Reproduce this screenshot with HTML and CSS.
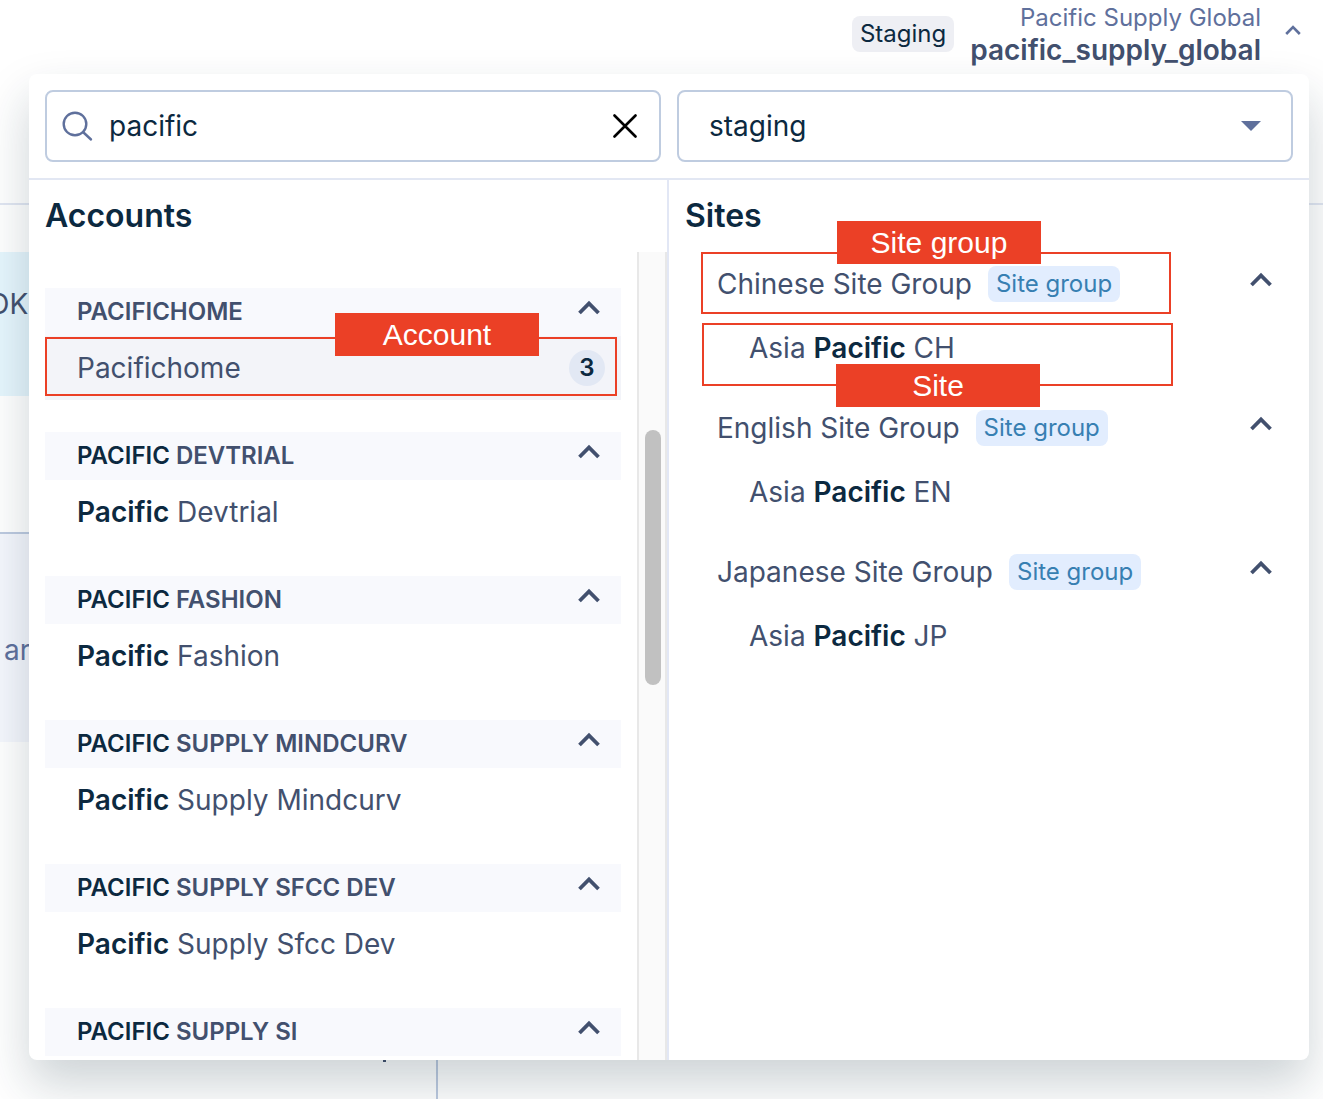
FILE: index.html
```html
<!DOCTYPE html>
<html lang="en">
<head>
<meta charset="utf-8">
<title>Account switcher</title>
<link rel="stylesheet" href="styles.css">
</head>
<body>
<svg class="sprite" aria-hidden="true">
  <symbol id="chevron" viewBox="0 0 24 16"><path d="M2.500 13 12 3.500 21.500 13" fill="none" stroke="currentColor" stroke-width="3.800"/></symbol>
</svg>

<header class="topbar">
  <span class="env">Staging</span>
  <div class="current">
    <span class="current-name">Pacific Supply Global</span>
    <strong class="current-id">pacific_supply_global</strong>
  </div>
  <button class="icon-button toggle" type="button" aria-label="Close switcher">
    <svg width="16" height="10" viewBox="0 0 16 10"><path d="M1.200 9 8 2.200 14.800 9" fill="none" stroke="currentColor" stroke-width="2.600"/></svg>
  </button>
</header>

<main class="stage">
  <div class="page" aria-hidden="true">
    <div class="page-head"></div>
    <div class="page-banner"><span>OK</span></div>
    <div class="page-block"><span>ar</span></div>
    <div class="page-columns"><div class="page-column"><i class="speck"></i></div></div>
  </div>

  <div class="panel">
    <form class="filters">
      <div class="field">
        <svg class="search-icon" width="32" height="32" viewBox="0 0 32 32"><g fill="none" stroke="currentColor" stroke-width="2.400" stroke-linecap="round"><circle cx="14" cy="14" r="11.300"/><path d="M22 22 30 29.500"/></g></svg>
        <input class="search" type="text" value="pacific" aria-label="Search accounts">
        <button class="icon-button clear" type="button" aria-label="Clear search">
          <svg width="24" height="24" viewBox="0 0 24 24"><path d="M1.500 1.500 22.500 22.500M22.500 1.500 1.500 22.500" stroke="currentColor" stroke-width="2.600" stroke-linecap="round"/></svg>
        </button>
      </div>
      <div class="field">
        <select class="select" aria-label="Environment"><option>staging</option></select>
        <svg class="caret" width="20" height="10" viewBox="0 0 20 10"><path d="M0 0H20L10 10Z" fill="currentColor"/></svg>
      </div>
    </form>

    <div class="columns">
      <section class="accounts">
        <h2 class="title">Accounts</h2>
        <div class="scroll">
          <div class="account-list">
            <div class="account">
              <button class="account-head" type="button"><span>PACIFICHOME</span><svg class="chevron"><use href="#chevron"/></svg></button>
              <div class="account-row selected">
                <a class="link" href="#">Pacifichome</a><span class="count">3</span>
                <div class="mark mark-account"><span class="tag">Account</span></div>
              </div>
            </div>
            <div class="account">
              <button class="account-head" type="button"><span><b>PACIFIC</b> DEVTRIAL</span><svg class="chevron"><use href="#chevron"/></svg></button>
              <div class="account-row"><a class="link" href="#"><b>Pacific</b> Devtrial</a></div>
            </div>
            <div class="account">
              <button class="account-head" type="button"><span><b>PACIFIC</b> FASHION</span><svg class="chevron"><use href="#chevron"/></svg></button>
              <div class="account-row"><a class="link" href="#"><b>Pacific</b> Fashion</a></div>
            </div>
            <div class="account">
              <button class="account-head" type="button"><span><b>PACIFIC</b> SUPPLY MINDCURV</span><svg class="chevron"><use href="#chevron"/></svg></button>
              <div class="account-row"><a class="link" href="#"><b>Pacific</b> Supply Mindcurv</a></div>
            </div>
            <div class="account">
              <button class="account-head" type="button"><span><b>PACIFIC</b> SUPPLY SFCC DEV</span><svg class="chevron"><use href="#chevron"/></svg></button>
              <div class="account-row"><a class="link" href="#"><b>Pacific</b> Supply Sfcc Dev</a></div>
            </div>
            <div class="account">
              <button class="account-head" type="button"><span><b>PACIFIC</b> SUPPLY SI</span><svg class="chevron"><use href="#chevron"/></svg></button>
            </div>
          </div>
          <div class="track"><div class="thumb"></div></div>
        </div>
      </section>

      <section class="sites">
        <h2 class="title">Sites</h2>
        <div class="site-list">
          <div class="site-group">
            <div class="group-row">
              <a class="link" href="#">Chinese Site Group</a><span class="badge">Site group</span>
              <button class="icon-button fold" type="button" aria-label="Collapse"><svg class="chevron"><use href="#chevron"/></svg></button>
              <div class="mark mark-group"><span class="tag">Site group</span></div>
            </div>
            <div class="site-row">
              <a class="link" href="#">Asia <b>Pacific</b> CH</a>
              <div class="mark mark-site"><span class="tag">Site</span></div>
            </div>
          </div>
          <div class="site-group">
            <div class="group-row">
              <a class="link" href="#">English Site Group</a><span class="badge">Site group</span>
              <button class="icon-button fold" type="button" aria-label="Collapse"><svg class="chevron"><use href="#chevron"/></svg></button>
            </div>
            <div class="site-row"><a class="link" href="#">Asia <b>Pacific</b> EN</a></div>
          </div>
          <div class="site-group">
            <div class="group-row">
              <a class="link" href="#">Japanese Site Group</a><span class="badge">Site group</span>
              <button class="icon-button fold" type="button" aria-label="Collapse"><svg class="chevron"><use href="#chevron"/></svg></button>
            </div>
            <div class="site-row"><a class="link" href="#">Asia <b>Pacific</b> JP</a></div>
          </div>
        </div>
      </section>
    </div>
  </div>
</main>
</body>
</html>
```

FILE: styles.css
```css
* { box-sizing: border-box; }

body {
  margin: 0;
  min-height: 100vh;
  display: flex;
  flex-direction: column;
  background: #fff;
  color: #42506e;
  font: 400 28px/32px Inter, "Liberation Sans", sans-serif;
  overflow-x: hidden;
}

button, input, select { font: inherit; color: inherit; }
b { font-weight: 600; color: #0c2940; }
svg { display: block; flex: none; }
.sprite { position: absolute; width: 0; height: 0; }
.icon-button { display: block; padding: 0; border: 0; background: none; }

/* Top bar */
.topbar {
  display: flex;
  justify-content: flex-end;
  align-items: flex-start;
  height: 74px;
  padding: 2px 22px 0 16px;
}
.env {
  margin: 14px 16px 0 0;
  padding: 2px 8px;
  border-radius: 8px;
  background: #eeeff4;
  color: #0c2940;
  font-size: 24px;
}
.current { display: flex; flex-direction: column; align-items: flex-end; }
.current-name { font-size: 24px; color: #5f709c; }
.current-id { font-weight: 600; }
.toggle { margin: 23px 0 0 24px; color: #5f709c; }

/* The page and the panel over it share one grid cell */
.stage { flex: 1; display: grid; }
.page, .panel { grid-area: 1 / 1; min-width: 0; }
.page { display: flex; flex-direction: column; color: #5f709c; overflow: hidden; }
.page-head { height: 131px; border-bottom: 2px solid #e1e6f2; }
.page-banner, .page-block { width: 50%; }
.page-banner {
  display: flex;
  align-items: center;
  height: 144px;
  margin: 47px 0 136px;
  background: #e6f6fd;
  color: #42506e;
}
.page-banner span { margin-left: -12px; padding-bottom: 40px; }
.page-block {
  height: 210px;
  padding: 100px 4px;
  border-top: 2px solid #bdcae0;
  background: #f5f7fd;
}
.page-columns { flex: 1; display: flex; }
.page-column {
  display: flex;
  justify-content: flex-end;
  align-items: flex-end;
  width: 438px;
  padding: 0 50px 37px 0;
  border-right: 2px solid #bdcae0;
}
.speck { width: 3px; height: 2px; background: #42506e; }

/* Panel */
.panel {
  display: flex;
  flex-direction: column;
  position: relative;
  margin: 0 14px 39px 29px;
  border-radius: 8px;
  background: #fff;
  box-shadow: 0 24px 48px rgba(20, 45, 60, .21);
}
.filters {
  display: flex;
  gap: 16px;
  padding: 16px;
  border-bottom: 2px solid #e2e7f3;
}
.field {
  flex: 1;
  display: flex;
  align-items: center;
  min-width: 0;
  height: 72px;
  padding: 0 14px;
  border: 2px solid #bfcce0;
  border-radius: 8px;
  color: #5f709c;
}
.search, .select {
  flex: 1;
  min-width: 0;
  height: 100%;
  padding: 0;
  border: 0;
  outline: 0;
  background: none;
  color: #0c2940;
}
.search { margin-left: 16px; }
.clear { margin-right: 8px; color: #000; }
.select { appearance: none; margin: 0 -20px 0 16px; }
.caret { margin-right: 16px; pointer-events: none; }

.columns { flex: 1; display: grid; grid-template-columns: 1fr 1fr; }
.title {
  margin: 0;
  padding: 16px;
  color: #0c2940;
  font-size: 32px;
  font-weight: 600;
  line-height: 40px;
}
.link { color: inherit; text-decoration: none; white-space: nowrap; }
.chevron { width: 24px; height: 16px; color: #42506e; }

/* Accounts */
.accounts { display: flex; flex-direction: column; border-right: 2px solid #e2e7f5; min-width: 0; }
.scroll { flex: 1; display: flex; }
.account-list {
  flex: 1;
  display: flex;
  flex-direction: column;
  gap: 32px;
  padding: 36px 16px 4px;
}
.account-head {
  display: flex;
  justify-content: space-between;
  align-items: flex-start;
  width: 100%;
  height: 48px;
  padding: 8px 20px 8px 32px;
  border: 0;
  background: #f8f9fd;
  font-size: 24px;
  font-weight: 600;
  text-align: left;
}
.account-head .chevron { margin-top: 4px; }
.account-row {
  position: relative;
  display: flex;
  align-items: center;
  justify-content: space-between;
  height: 64px;
  padding: 0 16px 0 32px;
}
.selected { background: #f3f4f9; }
.count {
  width: 36px;
  height: 36px;
  border-radius: 50%;
  background: #e2e8f4;
  color: #0c2940;
  font-size: 24px;
  font-weight: 600;
  line-height: 36px;
  text-align: center;
}
.track {
  width: 30px;
  padding: 178px 4px 0 6px;
  border: solid #e8e8e8;
  border-width: 0 2px;
  background: #fafafa;
}
.thumb { width: 16px; height: 255px; border-radius: 8px; background: #c1c1c1; }

/* Sites */
.sites { min-width: 0; }
.site-list { display: flex; flex-direction: column; gap: 16px; padding: 0 36px 16px 32px; }
.group-row, .site-row { position: relative; display: flex; align-items: center; height: 64px; padding-left: 16px; }
.site-row { padding-left: 48px; }
.badge {
  margin-left: 16px;
  padding: 2px 8px;
  border-radius: 8px;
  background: #e2edfe;
  color: #377fb2;
  font-size: 24px;
  white-space: nowrap;
}
.fold { margin: 0 0 8px auto; }

/* Red callouts */
.mark { position: absolute; border: 2px solid #eb4026; }
.tag {
  position: absolute;
  width: 204px;
  height: 43px;
  background: #eb4026;
  color: #fff;
  font: 30px/43px "Liberation Sans", Arial, sans-serif;
  text-align: center;
}
.mark-account { inset: 1px 4px 4px 0; }
.mark-account .tag { right: 76px; top: -26px; }
.mark-group { inset: 0 102px 2px 0; }
.mark-group .tag { left: 134px; top: -33px; }
.mark-site { inset: 7px 100px -6px 1px; }
.mark-site .tag { left: 132px; bottom: -23px; }
```
